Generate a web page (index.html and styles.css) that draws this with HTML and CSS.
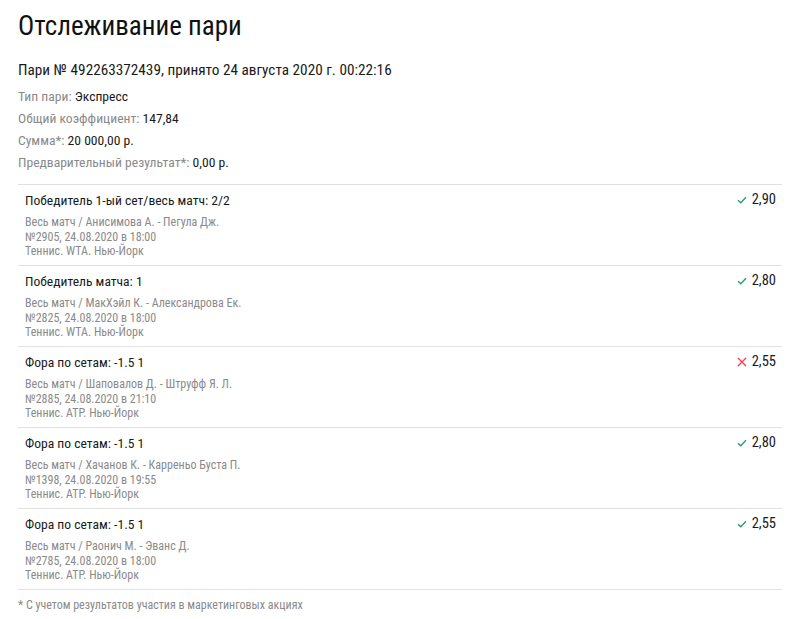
FILE: index.html
```html
<!DOCTYPE html>
<html lang="ru">
<head>
    <meta charset="UTF-8">
    <meta name="viewport" content="width=device-width, initial-scale=1.0">
    <title>Отслеживание пари</title>
    <link rel="stylesheet" href="styles.css">
</head>
<body>

<div id="betPage">
    <h1 class="pageTitle">Отслеживание пари</h1>

    <div class="betHeader">Пари № 492263372439, принято 24 августа 2020 г. 00:22:16</div>

    <div class="betInfo">
        <div class="infoLine"><span class="label">Тип пари:</span> Экспресс</div>
        <div class="infoLine"><span class="label">Общий коэффициент:</span> 147,84</div>
        <div class="infoLine"><span class="label">Сумма*:</span> 20 000,00 р.</div>
        <div class="infoLine"><span class="label">Предварительный результат*:</span> 0,00 р.</div>
    </div>

    <div class="eventList">
        <div class="eventRow">
            <div class="eventMain">
                <div class="eventOutcome">Победитель 1-ый сет/весь матч: 2/2</div>
                <div class="eventDetails">
                    <div>Весь матч / Анисимова А. - Пегула Дж.</div>
                    <div>№2905, 24.08.2020 в 18:00</div>
                    <div>Теннис. WTA. Нью-Йорк</div>
                </div>
            </div>
            <div class="eventOdds win">
                <svg class="statusIcon" viewBox="0 0 10 10"><path d="M1 5.2 L3.8 7.8 L9 2.2"/></svg>2,90
            </div>
        </div>

        <div class="eventRow">
            <div class="eventMain">
                <div class="eventOutcome">Победитель матча: 1</div>
                <div class="eventDetails">
                    <div>Весь матч / МакХэйл К. - Александрова Ек.</div>
                    <div>№2825, 24.08.2020 в 18:00</div>
                    <div>Теннис. WTA. Нью-Йорк</div>
                </div>
            </div>
            <div class="eventOdds win">
                <svg class="statusIcon" viewBox="0 0 10 10"><path d="M1 5.2 L3.8 7.8 L9 2.2"/></svg>2,80
            </div>
        </div>

        <div class="eventRow">
            <div class="eventMain">
                <div class="eventOutcome">Фора по сетам: -1.5 1</div>
                <div class="eventDetails">
                    <div>Весь матч / Шаповалов Д. - Штруфф Я. Л.</div>
                    <div>№2885, 24.08.2020 в 21:10</div>
                    <div>Теннис. ATP. Нью-Йорк</div>
                </div>
            </div>
            <div class="eventOdds lose">
                <svg class="statusIcon" viewBox="0 0 10 10"><path d="M1 1 L9 9 M9 1 L1 9"/></svg>2,55
            </div>
        </div>

        <div class="eventRow">
            <div class="eventMain">
                <div class="eventOutcome">Фора по сетам: -1.5 1</div>
                <div class="eventDetails">
                    <div>Весь матч / Хачанов К. - Карреньо Буста П.</div>
                    <div>№1398, 24.08.2020 в 19:55</div>
                    <div>Теннис. ATP. Нью-Йорк</div>
                </div>
            </div>
            <div class="eventOdds win">
                <svg class="statusIcon" viewBox="0 0 10 10"><path d="M1 5.2 L3.8 7.8 L9 2.2"/></svg>2,80
            </div>
        </div>

        <div class="eventRow">
            <div class="eventMain">
                <div class="eventOutcome">Фора по сетам: -1.5 1</div>
                <div class="eventDetails">
                    <div>Весь матч / Раонич М. - Эванс Д.</div>
                    <div>№2785, 24.08.2020 в 18:00</div>
                    <div>Теннис. ATP. Нью-Йорк</div>
                </div>
            </div>
            <div class="eventOdds win">
                <svg class="statusIcon" viewBox="0 0 10 10"><path d="M1 5.2 L3.8 7.8 L9 2.2"/></svg>2,55
            </div>
        </div>
    </div>

    <div class="footnote">* С учетом результатов участия в маркетинговых акциях</div>
</div>

</body>
</html>
```

FILE: styles.css
```css
body {
    margin: 0;
    font-family: "Roboto Condensed", Roboto, sans-serif;
    background-color: white;
    color: #1a1a1a;
}
#betPage {
    padding: 10px 18px 0;
}
.pageTitle {
    font-size: 27px;
    font-weight: 400;
    line-height: 32px;
    margin: 0 0 17px;
    color: #111;
}
.betHeader {
    font-size: 15.25px;
    line-height: 22px;
    margin-bottom: 4px;
}
.infoLine {
    font-size: 13.6px;
    line-height: 22px;
}
.label {
    color: #8a8a8a;
}
.eventList {
    margin-top: 11px;
    border-bottom: 1px solid #e2e2e2;
}
.eventRow {
    display: flex;
    justify-content: space-between;
    border-top: 1px solid #e2e2e2;
    padding: 7px 6px 6.5px 7px;
}
.eventOutcome {
    font-size: 13.6px;
    line-height: 16px;
}
.eventDetails {
    margin-top: 7px;
    font-size: 12px;
    line-height: 14.5px;
    color: #8a8a8a;
}
.eventOdds {
    font-size: 14.5px;
    line-height: 16px;
    display: flex;
    align-items: center;
    height: 16px;
}
.statusIcon {
    width: 10px;
    height: 10px;
    margin-right: 5px;
    fill: none;
    stroke-width: 1.4;
}
.win .statusIcon {
    stroke: #2a9d6f;
}
.lose .statusIcon {
    stroke: #f0414f;
}
.footnote {
    font-size: 12px;
    line-height: 16px;
    color: #8a8a8a;
    padding-top: 7px;
}
```
